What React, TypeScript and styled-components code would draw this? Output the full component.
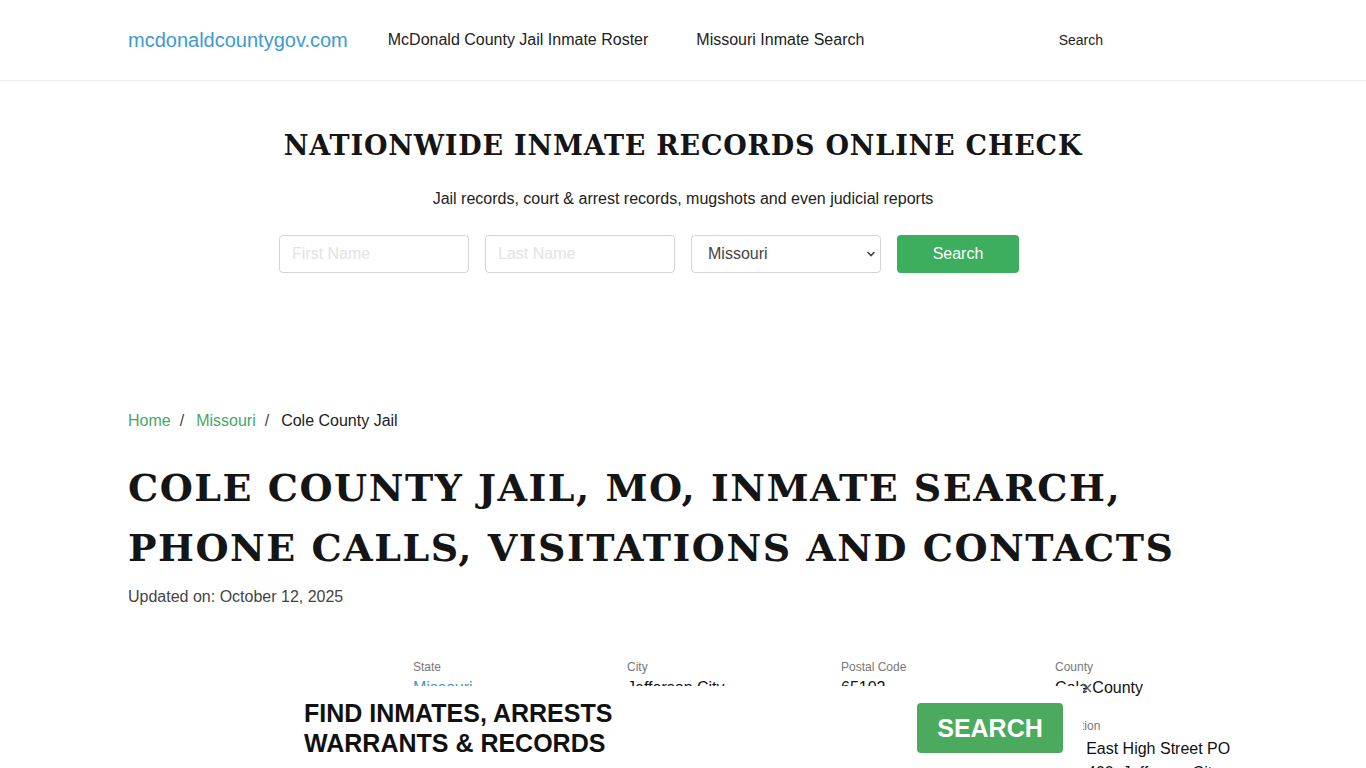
import React from "react";
import styled, { createGlobalStyle } from "styled-components";

const Global = createGlobalStyle`
  html, body { margin: 0; padding: 0; background: #fff; }
  body { font-family: "Liberation Sans", Arial, sans-serif; color: #222; }
  * { box-sizing: border-box; }
`;

const Header = styled.header`
  height: 81px;
  border-bottom: 1px solid #ececec;
`;

const Container = styled.div`
  width: 1110px;
  margin: 0 auto;
`;

const NavBar = styled(Container)`
  display: flex;
  align-items: center;
  height: 80px;
`;

const Logo = styled.a`
  font-size: 20px;
  color: #3d9ad4;
  text-decoration: none;
  margin-right: 40px;
`;

const NavLink = styled.a`
  font-size: 16px;
  color: #222;
  text-decoration: none;
  margin-right: 48px;
`;

const NavSearch = styled.a`
  font-size: 14px;
  color: #222;
  margin-left: auto;
  margin-right: 135px;
`;

const Hero = styled.section`
  text-align: center;
  padding-top: 47px;
  height: 330px;
`;

const HeroTitle = styled.h2`
  margin: 0;
  font-family: "DejaVu Serif", Georgia, serif;
  font-weight: bold;
  font-size: 27px;
  letter-spacing: 0.8px;
  color: #151515;
  line-height: 36px;
`;

const HeroSub = styled.p`
  margin: 26px 0 0;
  font-size: 16px;
  color: #222;
`;

const Form = styled.form`
  display: flex;
  justify-content: center;
  gap: 16px;
  margin-top: 27px;
  padding-right: 68px;
`;

const Input = styled.input`
  width: 190px;
  height: 38px;
  border: 1px solid #d4d4d4;
  border-radius: 4px;
  padding: 0 12px;
  font-size: 16px;
  font-family: "Liberation Sans", Arial, sans-serif;
  &::placeholder { color: #e3e3e3; }
`;

const SelectWrap = styled.div`
  position: relative;
  width: 190px;
  height: 38px;
  border: 1px solid #d4d4d4;
  border-radius: 4px;
  display: flex;
  align-items: center;
  padding: 0 16px;
  font-size: 16px;
  color: #444;
  text-align: left;
`;

const Chevron = styled.svg`
  position: absolute;
  right: 4px;
  top: 14px;
`;

const GreenButton = styled.button`
  width: 122px;
  height: 38px;
  border: none;
  border-radius: 4px;
  background: #3cae5d;
  color: #fff;
  font-size: 16px;
  font-family: "Liberation Sans", Arial, sans-serif;
`;

const Crumbs = styled.nav`
  display: flex;
  align-items: center;
  font-size: 16px;
  height: 20px;
`;

const CrumbLink = styled.a`
  color: #46a865;
  text-decoration: none;
`;

const Sep = styled.span`
  color: #444;
  padding: 0 12px 0 9px;
`;

const Title = styled.h1`
  margin: 27px 0 0;
  font-family: "DejaVu Serif", Georgia, serif;
  font-weight: bold;
  font-size: 38px;
  line-height: 60px;
  letter-spacing: 1.5px;
  color: #151515;
`;

const Updated = styled.p`
  margin: 10px 0 0;
  font-size: 16px;
  color: #444;
`;

const InfoGrid = styled.div`
  display: grid;
  grid-template-columns: repeat(4, 214px);
  row-gap: 20px;
  margin: 53px 0 0 285px;
`;

const InfoItem = styled.div``;

const InfoLabel = styled.div`
  font-size: 12px;
  color: #777;
  line-height: 16px;
`;

const InfoValue = styled.div<{ $link?: boolean; $tall?: boolean }>`
  font-size: 16px;
  line-height: ${(p) => (p.$tall ? "24px" : "20px")};
  margin-top: 3px;
  color: ${(p) => (p.$link ? "#3d9ad4" : "#111")};
  width: 190px;
`;

const Banner = styled.div`
  position: fixed;
  left: 50%;
  bottom: 0;
  transform: translateX(-50%);
  width: 800px;
  height: 82px;
  background: #fff;
  display: flex;
  align-items: center;
  justify-content: space-between;
  padding: 0 20px 0 21px;
`;

const BannerText = styled.div`
  font-weight: bold;
  font-size: 25px;
  line-height: 30px;
  color: #111;
  margin-top: 1px;
`;

const BannerButton = styled.button`
  width: 146px;
  height: 50px;
  border: none;
  border-radius: 4px;
  background: #4caa5f;
  color: #fff;
  font-weight: bold;
  font-size: 25px;
  font-family: "Liberation Sans", Arial, sans-serif;
  margin-top: 2px;
`;

const Close = styled.svg`
  position: absolute;
  right: -11px;
  top: -5px;
`;

export default function App() {
  return (
    <>
      <Global />
      <Header>
        <NavBar>
          <Logo href="#">mcdonaldcountygov.com</Logo>
          <NavLink href="#">McDonald County Jail Inmate Roster</NavLink>
          <NavLink href="#">Missouri Inmate Search</NavLink>
          <NavSearch>Search</NavSearch>
        </NavBar>
      </Header>
      <Hero>
        <HeroTitle>NATIONWIDE INMATE RECORDS ONLINE CHECK</HeroTitle>
        <HeroSub>Jail records, court &amp; arrest records, mugshots and even judicial reports</HeroSub>
        <Form onSubmit={(e) => e.preventDefault()}>
          <Input placeholder="First Name" />
          <Input placeholder="Last Name" />
          <SelectWrap>
            Missouri
            <Chevron width="10" height="8" viewBox="0 0 10 8">
              <path d="M1.5 2 L5 5.5 L8.5 2" fill="none" stroke="#444" strokeWidth="1.6" />
            </Chevron>
          </SelectWrap>
          <GreenButton type="button">Search</GreenButton>
        </Form>
      </Hero>
      <Container>
        <Crumbs>
          <CrumbLink href="#">Home</CrumbLink>
          <Sep>/</Sep>
          <CrumbLink href="#">Missouri</CrumbLink>
          <Sep>/</Sep>
          <span>Cole County Jail</span>
        </Crumbs>
        <Title>
          COLE COUNTY JAIL, MO, INMATE SEARCH,
          <br />
          PHONE CALLS, VISITATIONS AND CONTACTS
        </Title>
        <Updated>Updated on: October 12, 2025</Updated>
        <InfoGrid>
          <InfoItem>
            <InfoLabel>State</InfoLabel>
            <InfoValue $link>Missouri</InfoValue>
          </InfoItem>
          <InfoItem>
            <InfoLabel>City</InfoLabel>
            <InfoValue>Jefferson City</InfoValue>
          </InfoItem>
          <InfoItem>
            <InfoLabel>Postal Code</InfoLabel>
            <InfoValue>65102</InfoValue>
          </InfoItem>
          <InfoItem>
            <InfoLabel>County</InfoLabel>
            <InfoValue>Cole County</InfoValue>
          </InfoItem>
          <InfoItem />
          <InfoItem />
          <InfoItem />
          <InfoItem>
            <InfoLabel>Location</InfoLabel>
            <InfoValue $tall>350 East High Street PO Box 400, Jefferson City, MO 65101</InfoValue>
          </InfoItem>
        </InfoGrid>
      </Container>
      <Banner>
        <BannerText>
          FIND INMATES, ARRESTS
          <br />
          WARRANTS &amp; RECORDS
        </BannerText>
        <BannerButton type="button">SEARCH</BannerButton>
        <Close width="14" height="14" viewBox="0 0 14 14">
          <path d="M3 3 L11 11 M11 3 L3 11" stroke="#555" strokeWidth="1.4" />
        </Close>
      </Banner>
    </>
  );
}
